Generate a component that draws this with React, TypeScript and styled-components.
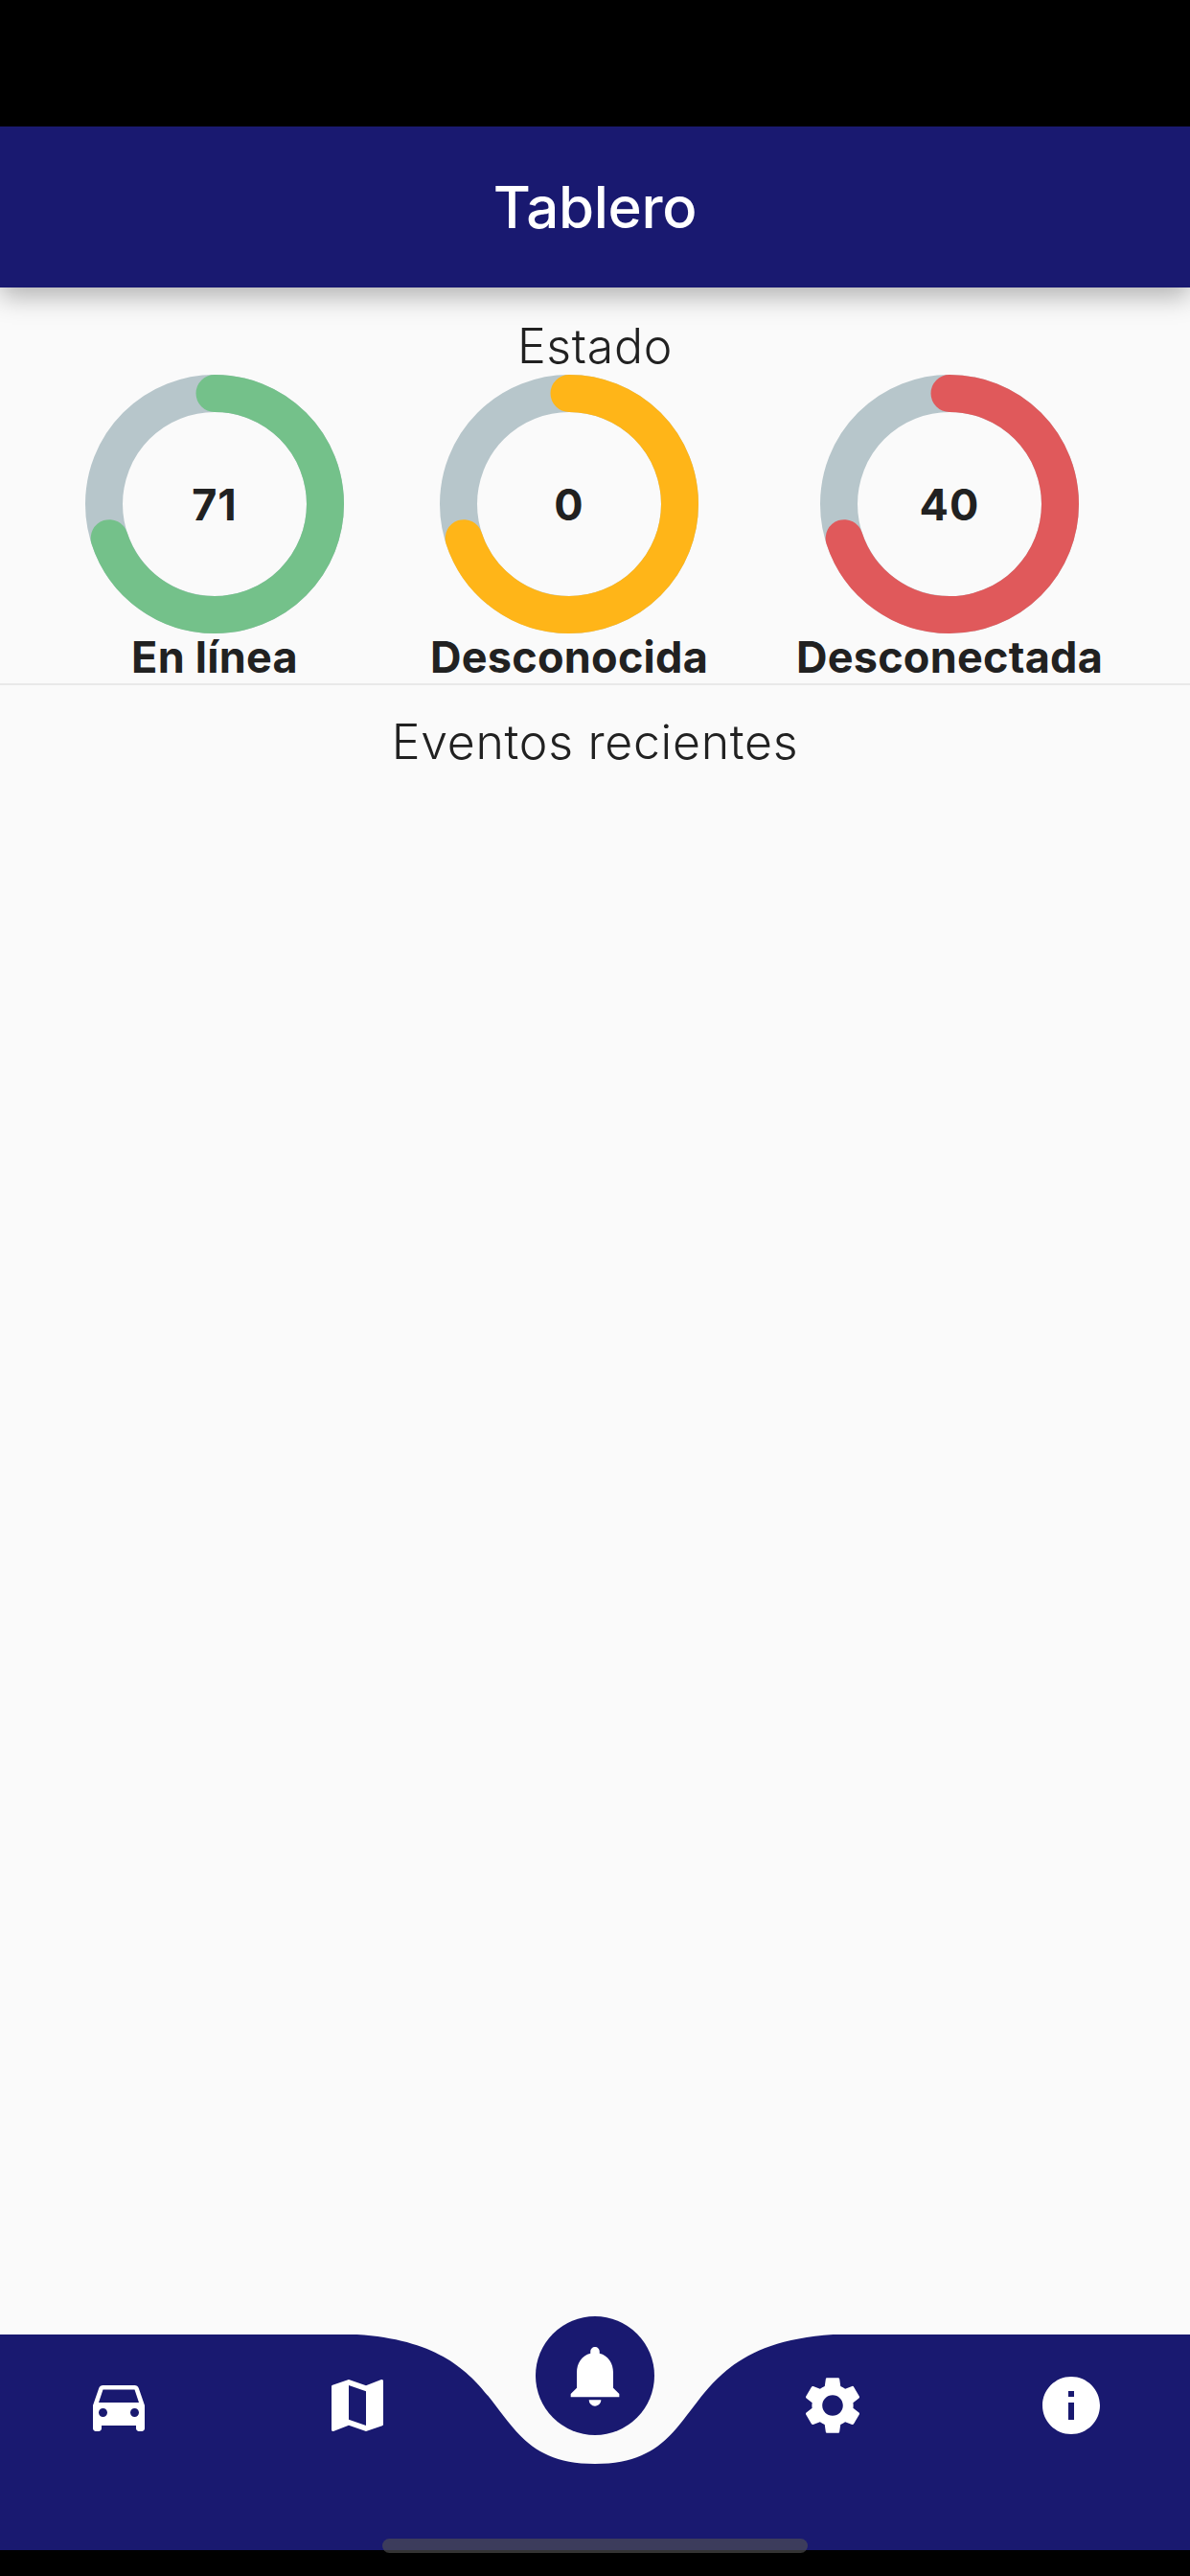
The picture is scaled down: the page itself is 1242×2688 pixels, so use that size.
import React from 'react';
import styled, { createGlobalStyle } from 'styled-components';
import { MdDirectionsCar, MdMap, MdNotifications, MdSettings, MdInfo } from 'react-icons/md';

const NAVY = '#191970';
const PAGE = '#fafafa';

const GlobalStyle = createGlobalStyle`
  html, body {
    margin: 0;
    padding: 0;
    background: #000;
  }
  * {
    box-sizing: border-box;
  }
`;

const Screen = styled.div`
  width: 1242px;
  height: 2688px;
  display: flex;
  flex-direction: column;
  position: relative;
  overflow: hidden;
  background: ${PAGE};
  font-family: Inter, "Liberation Sans", sans-serif;
  color: #212121;
`;

const StatusBar = styled.div`
  height: 132px;
  flex: none;
  background: #000;
  position: relative;
  z-index: 3;
`;

const Header = styled.header`
  height: 168px;
  flex: none;
  display: flex;
  align-items: center;
  justify-content: center;
  background: ${NAVY};
  color: #fff;
  font-size: 60px;
  font-weight: 500;
  letter-spacing: -0.3px;
  position: relative;
  z-index: 2;
  box-shadow: 0 9px 26px rgba(0, 0, 0, 0.3);
`;

const Main = styled.main`
  flex: 1;
  display: flex;
  flex-direction: column;
  padding-top: 31px;
`;

const SectionTitle = styled.h2`
  margin: 0;
  font-size: 50px;
  line-height: 60px;
  font-weight: 300;
  letter-spacing: 0.7px;
  text-align: center;
`;

const StatusRow = styled.div`
  display: grid;
  grid-template-columns: 448px 292px 1fr;
  justify-items: center;
  padding-bottom: 2px;
  border-bottom: 2px solid #e9e9e9;
  margin-bottom: 29px;
`;

const StatusItem = styled.div`
  display: flex;
  flex-direction: column;
  align-items: center;
  min-width: 270px;
`;

const Ring = styled.div`
  width: 270px;
  height: 270px;
  position: relative;
  svg {
    display: block;
  }
`;

const RingValue = styled.span`
  position: absolute;
  inset: 0;
  display: flex;
  align-items: center;
  justify-content: center;
  font-size: 45px;
  font-weight: 700;
  letter-spacing: 1px;
`;

const StatusLabel = styled.span`
  font-size: 45px;
  line-height: 50px;
  font-weight: 700;
  letter-spacing: 0.25px;
  white-space: nowrap;
`;

const NavBar = styled.nav`
  height: 225px;
  flex: none;
  background: ${NAVY};
  position: relative;
`;

const NavNotch = styled.svg`
  position: absolute;
  inset: 0;
  display: block;
`;

const NavItems = styled.div`
  display: grid;
  grid-template-columns: repeat(5, 1fr);
  position: relative;
  padding-top: 38px;
`;

const NavItem = styled.div`
  height: 72px;
  display: flex;
  justify-content: center;
  color: #fff;
  font-size: 72px;
`;

const NavFab = styled.div`
  position: absolute;
  left: 559px;
  top: -19px;
  width: 124px;
  height: 124px;
  border-radius: 50%;
  background: ${NAVY};
  display: flex;
  align-items: center;
  justify-content: center;
  color: #fff;
  font-size: 76px;
`;

const BottomInset = styled.div`
  height: 27px;
  flex: none;
  background: #000;
`;

const HomeIndicator = styled.div`
  position: absolute;
  left: 399px;
  top: 2649px;
  width: 444px;
  height: 15px;
  border-radius: 8px;
  background: rgba(80, 80, 80, 0.63);
`;

const statuses = [
  { label: 'En línea', value: 71, color: '#74c18a' },
  { label: 'Desconocida', value: 0, color: '#ffb518' },
  { label: 'Desconectada', value: 40, color: '#e0595b' },
];

const StatusRing: React.FC<{ value: number; color: string }> = ({ value, color }) => (
  <Ring>
    <svg width="270" height="270" viewBox="0 0 270 270" fill="none">
      <circle cx="135" cy="135" r="115.5" stroke="#b7c6cb" strokeWidth="39" />
      <circle
        cx="135"
        cy="135"
        r="115.5"
        stroke={color}
        strokeWidth="39"
        strokeLinecap="round"
        pathLength={100}
        strokeDasharray="70 100"
        transform="rotate(-90 135 135)"
      />
    </svg>
    <RingValue>{value}</RingValue>
  </Ring>
);

const App: React.FC = () => {
  return (
    <Screen>
      <GlobalStyle />
      <StatusBar />
      <Header>Tablero</Header>
      <Main>
        <SectionTitle>Estado</SectionTitle>
        <StatusRow>
          {statuses.map((s) => (
            <StatusItem key={s.label}>
              <StatusRing value={s.value} color={s.color} />
              <StatusLabel>{s.label}</StatusLabel>
            </StatusItem>
          ))}
        </StatusRow>
        <SectionTitle>Eventos recientes</SectionTitle>
      </Main>
      <NavBar>
        <NavNotch width="1242" height="225" viewBox="0 0 1242 225">
          <path
            d="M372.6 0C546.5 11.25 496.8 135 621 135C745.2 135 695.5 11.25 869.4 0Z"
            fill={PAGE}
          />
        </NavNotch>
        <NavItems>
          <NavItem><MdDirectionsCar /></NavItem>
          <NavItem><MdMap /></NavItem>
          <NavItem />
          <NavItem><MdSettings /></NavItem>
          <NavItem><MdInfo /></NavItem>
        </NavItems>
        <NavFab><MdNotifications /></NavFab>
      </NavBar>
      <BottomInset />
      <HomeIndicator />
    </Screen>
  );
};

export default App;
